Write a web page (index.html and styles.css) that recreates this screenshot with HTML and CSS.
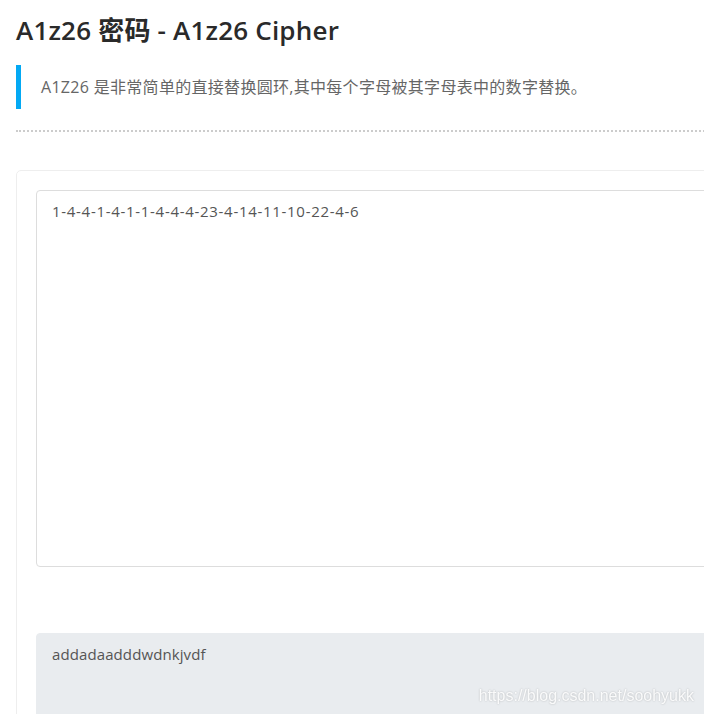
FILE: index.html
```html
<!DOCTYPE html>
<html lang="zh">
<head>
    <meta charset="UTF-8">
    <meta name="viewport" content="width=device-width, initial-scale=1.0">
    <title>A1z26 密码 - A1z26 Cipher</title>
    <link rel="stylesheet" href="styles.css">
</head>
<body>
    <main class="page">
        <h1 class="title">A1z26 密码 - A1z26 Cipher</h1>
        <blockquote class="intro">A1Z26 是非常简单的直接替换圆环,其中每个字母被其字母表中的数字替换。</blockquote>
        <hr class="divider">

        <!-- Input / output panel -->
        <div class="panel">
            <textarea class="field field-input">1-4-4-1-4-1-1-4-4-4-23-4-14-11-10-22-4-6</textarea>
            <textarea class="field field-output" readonly>addadaadddwdnkjvdf</textarea>
        </div>
    </main>
    <div class="watermark">https://blog.csdn.net/soohyukk</div>
</body>
</html>
```

FILE: styles.css
```css
/* Base */
body {
    margin: 0;
    padding: 0;
    background-color: #fff;
    font-family: 'Open Sans', 'Noto Sans CJK SC', sans-serif;
    overflow: hidden;
}

.page {
    padding: 15px 0 0 16px;
    width: 1000px;
}

/* Heading */
.title {
    margin: 0 0 19px;
    font-size: 26px;
    font-weight: 600;
    letter-spacing: 0.2px;
    line-height: 1.2;
    color: #2a2a2a;
}

/* Intro quote */
.intro {
    margin: 0;
    padding: 11px 20px;
    border-left: 5px solid #03a9f4;
    font-size: 16px;
    letter-spacing: 0.3px;
    line-height: 22px;
    color: #666;
}

.divider {
    margin: 21px 0 38px;
    border: none;
    border-top: 2px dotted #ccc;
}

/* Panel with the two text areas */
.panel {
    padding: 19px;
    border: 1px solid #eee;
    border-radius: 5px;
}

.field {
    display: block;
    box-sizing: border-box;
    width: 100%;
    padding: 10px 15px;
    border: 1px solid #ddd;
    border-radius: 4px;
    font-family: 'Open Sans', 'Noto Sans CJK SC', sans-serif;
    font-size: 15px;
    line-height: 20px;
    color: #555;
    resize: none;
}

.field-input {
    height: 377px;
    letter-spacing: 0.7px;
    background-color: #fff;
}

.field-output {
    margin-top: 66px;
    height: 200px;
    letter-spacing: 0.1px;
    background-color: #e9ecef;
    border-color: #e9ecef;
}

/* CSDN watermark over the screenshot */
.watermark {
    position: fixed;
    right: 10px;
    bottom: 9px;
    font-family: 'Liberation Sans', sans-serif;
    font-size: 16px;
    color: rgba(255, 255, 255, 0.9);
    text-shadow: 0 0 2px rgba(0, 0, 0, 0.25);
}
```
